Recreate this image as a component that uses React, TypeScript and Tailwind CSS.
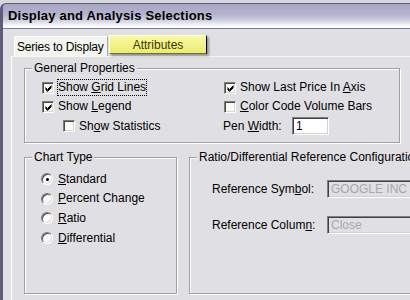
import React from "react";

const font = { fontFamily: '"Liberation Sans", Arial, sans-serif' };

function Check({ checked }: { checked?: boolean }) {
  return (
    <span className="relative inline-block w-[12px] h-[12px] shrink-0 border border-t-[#7c7c7c] border-l-[#7c7c7c] border-b-white border-r-white bg-[#fbfbf6] shadow-[inset_1px_1px_0_#4a4a4a,inset_-1px_-1px_0_#d8d8d4]">
      {checked && (
        <svg className="absolute left-[1px] top-[1px]" width="9" height="9" viewBox="0 0 9 9">
          <path d="M1.5 3.5 L3.5 5.5 L7.5 1.5 M1.5 4.5 L3.5 6.5 L7.5 2.5 M1.5 5.5 L3.5 7.5 L7.5 3.5" stroke="#000" strokeWidth="1" fill="none" />
        </svg>
      )}
    </span>
  );
}

function Radio({ checked }: { checked?: boolean }) {
  return (
    <span className="relative inline-block w-[12px] h-[12px] shrink-0 rounded-full border border-t-[#7c7c7c] border-l-[#7c7c7c] border-b-white border-r-white bg-white shadow-[inset_1px_1px_0_#4a4a4a,inset_-1px_-1px_0_#d8d8d4]">
      {checked && <span className="absolute left-[3.5px] top-[3.5px] w-[3px] h-[3px] rounded-full bg-black" />}
    </span>
  );
}

function Group({ label, className, children }: { label: string; className: string; children: React.ReactNode }) {
  return (
    <div className={"relative border border-[#a0a0a4] shadow-[inset_1px_1px_0_#ffffff,1px_1px_0_#ffffff] " + className}>
      <span className="absolute left-[7px] top-[-8px] bg-[#e0dfe3] px-[2px] leading-[14px] text-[12px] text-black whitespace-nowrap">
        {label}
      </span>
      {children}
    </div>
  );
}

function Sunken({ className, children }: { className: string; children: React.ReactNode }) {
  return (
    <div className={"border border-t-[#808080] border-l-[#808080] border-b-white border-r-white shadow-[inset_1px_1px_0_#404040,inset_-1px_-1px_0_#d4d0c8] overflow-hidden whitespace-nowrap text-[12px] leading-[16px] pl-[3px] " + className}>
      {children}
    </div>
  );
}

export default function App() {
  return (
    <div className="w-[410px] h-[300px] overflow-hidden bg-[#d6d6dc] pt-[3px] text-[12px] text-black" style={font}>
      <div className="h-[297px] rounded-tl-[6px] border-l-[3px] border-t border-[#5c5c7c] bg-[#e0dfe3] overflow-hidden">
        {/* title bar */}
        <div className="h-[25px] border-b-[1px] border-[#7a7a9c] bg-[linear-gradient(to_bottom,#a6a6c4_0%,#b4b4cf_45%,#d2d2e2_70%,#fbfbfd_92%,#ffffff_100%)] flex items-center pl-[5px]">
          <span className="font-bold text-[13px] tracking-[0.2px] leading-[16px] text-black whitespace-nowrap">Display and Analysis Selections</span>
        </div>
        {/* tabs + panel */}
        <div className="ml-[8px] mt-[7px]">
          <div className="flex items-start pl-[3px] h-[20px]">
            <div className="h-[20px] w-[94px] bg-[#f3f3ef] border-l border-t border-white border-r border-r-[#a8a8a8] flex items-center pl-[2px] leading-[14px] tracking-[-0.2px] whitespace-nowrap overflow-hidden">
              Series to Display
            </div>
            <div className="relative ml-[1px] mt-[-1px] h-[19px] w-[98px] bg-[linear-gradient(to_bottom,#f8f8a8,#ecec70)] border border-t-[#ffffe0] border-l-[#fffff0] border-r-black border-b-[#707030] shadow-[2px_2px_2px_rgba(0,0,0,0.35)] flex items-center justify-center leading-[14px] text-[#3a3a00] whitespace-nowrap">
              Attributes
            </div>
          </div>
          <div className="h-[260px] border-l border-t border-l-white border-t-[#f8f8ea] pl-[12px]">
            <Group label="General Properties" className="mt-[11px] w-[376px] h-[75px] pt-[9px]">
              <div className="flex pl-[17px]">
                <div className="w-[181px] flex flex-col">
                  <div className="h-[19px] flex items-center">
                    <Check checked />
                    <span className="ml-[3px] border border-dotted border-black px-[0px] leading-[15px] whitespace-nowrap">
                      Show <u>G</u>rid Lines
                    </span>
                  </div>
                  <div className="h-[19px] flex items-center">
                    <Check checked />
                    <span className="ml-[3px] border border-transparent leading-[15px] whitespace-nowrap">
                      Show <u>L</u>egend
                    </span>
                  </div>
                  <div className="h-[20px] flex items-center pl-[21px]">
                    <Check />
                    <span className="ml-[3px] border border-transparent leading-[15px] whitespace-nowrap">
                      Sh<u>o</u>w Statistics
                    </span>
                  </div>
                </div>
                <div className="flex flex-col">
                  <div className="h-[19px] flex items-center pl-[1px]">
                    <Check checked />
                    <span className="ml-[3px] border border-transparent leading-[15px] whitespace-nowrap">
                      Show Last Price In <u>A</u>xis
                    </span>
                  </div>
                  <div className="h-[19px] flex items-center pl-[1px]">
                    <Check />
                    <span className="ml-[3px] border border-transparent leading-[15px] whitespace-nowrap">
                      <u>C</u>olor Code Volume Bars
                    </span>
                  </div>
                  <div className="h-[20px] flex items-center">
                    <span className="w-[69px] leading-[15px] whitespace-nowrap">
                      Pen <u>W</u>idth:
                    </span>
                    <Sunken className="w-[37px] h-[18px] bg-white">1</Sunken>
                  </div>
                </div>
              </div>
            </Group>
            <div className="flex mt-[14px]">
              <Group label="Chart Type" className="w-[153px] h-[137px] shrink-0 pt-[11px] pl-[16px]">
                <div className="h-[20px] flex items-center">
                  <Radio checked />
                  <span className="ml-[5px] leading-[15px]"><u>S</u>tandard</span>
                </div>
                <div className="h-[19px] flex items-center">
                  <Radio />
                  <span className="ml-[5px] leading-[15px]"><u>P</u>ercent Change</span>
                </div>
                <div className="h-[20px] flex items-center">
                  <Radio />
                  <span className="ml-[5px] leading-[15px]"><u>R</u>atio</span>
                </div>
                <div className="h-[20px] flex items-center">
                  <Radio />
                  <span className="ml-[5px] leading-[15px]"><u>D</u>ifferential</span>
                </div>
              </Group>
              <Group label="Ratio/Differential Reference Configuration" className="ml-[12px] w-[260px] h-[137px] shrink-0 pt-[22px] pl-[22px]">
                <div className="h-[18px] flex items-center">
                  <span className="w-[115px] leading-[15px] whitespace-nowrap">Reference Sym<u>b</u>ol:</span>
                  <Sunken className="w-[120px] h-[18px] bg-[#e0dfe3] text-[#a8a8a8]">GOOGLE INC CLASS A</Sunken>
                </div>
                <div className="h-[18px] mt-[18px] flex items-center">
                  <span className="w-[115px] leading-[15px] whitespace-nowrap">Reference Colum<u>n</u>:</span>
                  <Sunken className="w-[120px] h-[18px] bg-[#e0dfe3] text-[#a8a8a8]">Close</Sunken>
                </div>
              </Group>
            </div>
          </div>
        </div>
      </div>
    </div>
  );
}
